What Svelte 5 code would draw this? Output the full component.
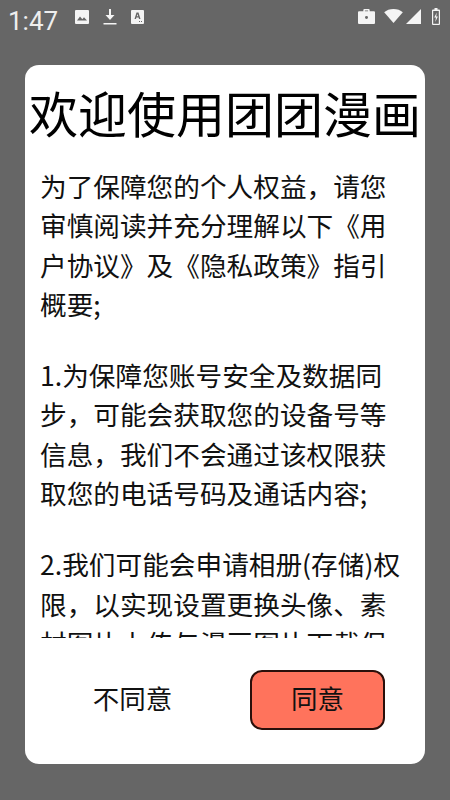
<script>
  const paragraphs = [
    ['为了保障您的个人权益，请您', '审慎阅读并充分理解以下《用', '户协议》及《隐私政策》指引', '概要;'],
    ['1.为保障您账号安全及数据同', '步，可能会获取您的设备号等', '信息，我们不会通过该权限获', '取您的电话号码及通话内容;'],
    ['2.我们可能会申请相册(存储)权', '限，以实现设置更换头像、素', '材图片上传与漫画图片下载保', '存等功能;']
  ];
</script>

<div class="page">
  <header class="status">
    <div class="left">
      <span class="time">1:47</span>
      <svg class="ic" width="14" height="14" viewBox="0 0 14 14"><path fill="#f4f4f4" d="M1 0h12a1 1 0 0 1 1 1v12a1 1 0 0 1-1 1H1a1 1 0 0 1-1-1V1a1 1 0 0 1 1-1z"/><path fill="#666" d="M2 10.500l3-4 2.300 2.800 1.700-2 3 3.200z"/></svg>
      <svg class="ic dl" width="14" height="17" viewBox="0 0 14 17"><path fill="#f4f4f4" d="M6 1h2v6h3.500L7 12 2.500 7H6zM0.500 15h13v1.500H.5z"/></svg>
      <svg class="ic a" width="13" height="14" viewBox="0 0 13 14"><path fill="#f4f4f4" d="M1 0h11a1 1 0 0 1 1 1v12a1 1 0 0 1-1 1H1a1 1 0 0 1-1-1V1a1 1 0 0 1 1-1z"/><path fill="#666" d="M5.500 2.500h2l2 6.500H8l-.4-1.500H5.400L5 9H3.500zM5.800 6.200h1.400L6.500 4z"/><path fill="#666" d="M8 11h1v1H8zM10 11h1v1h-1z"/></svg>
    </div>
    <div class="right">
      <svg width="17" height="15" viewBox="0 0 16 14"><path fill="#f4f4f4" d="M5 2V1a1 1 0 0 1 1-1h4a1 1 0 0 1 1 1v1h4a1 1 0 0 1 1 1v10a1 1 0 0 1-1 1H1a1 1 0 0 1-1-1V3a1 1 0 0 1 1-1zm1.500 0h3V1.300h-3z"/><circle cx="8" cy="8" r="1.400" fill="#666"/></svg>
      <svg class="wifi" width="19" height="14" viewBox="0 0 20 15"><path fill="#f4f4f4" d="M0 3.500C2.500 1.300 6 0 10 0s7.500 1.300 10 3.500L10 15z"/></svg>
      <svg class="signal" width="15" height="15" viewBox="0 0 15 15"><path fill="#f4f4f4" d="M15 0v15H0z"/></svg>
      <svg class="batt" width="8" height="17" viewBox="0 0 8 17"><path fill="#f4f4f4" d="M2.500 0h3v1.500H7a1 1 0 0 1 1 1V16a1 1 0 0 1-1 1H1a1 1 0 0 1-1-1V2.500a1 1 0 0 1 1-1h1.500z"/><path fill="#666" d="M1.200 3h5.600v12.800H1.200z"/><path fill="#f4f4f4" d="M4.800 4.500L2.200 9.500h1.700L3.300 14l2.600-5.500H4.200z"/></svg>
    </div>
  </header>

  <main class="card">
    <h1>欢迎使用团团漫画</h1>
    <div class="body">
      {#each paragraphs as lines}
        <p>
          {#each lines as line}
            <span class="line">{line}</span>
          {/each}
        </p>
      {/each}
    </div>
    <div class="actions">
      <button class="btn">不同意</button>
      <button class="btn agree">同意</button>
    </div>
  </main>
</div>

<style>
  :global(body) {
    margin: 0;
    background: #666666;
  }
  .page {
    width: 450px;
    height: 800px;
    background: #666666;
    overflow: hidden;
    font-family: "Noto Sans CJK SC", "Roboto", sans-serif;
    display: flex;
    flex-direction: column;
  }
  .status {
    height: 35px;
    flex: none;
    display: flex;
    justify-content: space-between;
    align-items: center;
    padding: 0 8px;
    box-sizing: border-box;
  }
  .left, .right {
    display: flex;
    align-items: center;
  }
  .left { margin-top: 2px; }
  .time {
    font-family: Roboto, sans-serif;
    font-size: 26px;
    color: #eeeeee;
    width: 67px;
    margin-top: 4px;
  }
  .ic { display: block; margin-top: -4px; }
  .dl { margin-left: 14px; }
  .a { margin-left: 14px; }
  .right {
    margin-top: -3px;
    margin-right: 1px;
  }
  .wifi { margin-left: 9px; }
  .signal { margin-left: 3px; }
  .batt { margin-left: 11px; margin-right: 1px; }
  .card {
    margin: 30px 25px 0;
    width: 400px;
    height: 699px;
    background: #fff;
    border-radius: 14px;
    display: flex;
    flex-direction: column;
    box-sizing: border-box;
  }
  h1 {
    margin: 0;
    font-weight: 400;
    font-size: 49px;
    line-height: 64px;
    height: 64px;
    padding-top: 15px;
    text-align: center;
    color: #000;
    white-space: nowrap;
  }
  .body {
    margin: 22px 0 0;
    padding: 0 15px;
    height: 472px;
    overflow: hidden;
    font-size: 26.67px;
    line-height: 39.3px;
    color: #111;
  }
  p { margin: 0 0 32px; }
  .line { display: block; white-space: nowrap; }
  .actions {
    display: flex;
    justify-content: space-between;
    padding: 0 40px;
    margin-top: 32px;
  }
  .btn {
    width: 135px;
    height: 60px;
    border: 2px solid transparent;
    border-radius: 12px;
    background: transparent;
    font-family: inherit;
    font-size: 26.5px;
    color: #111;
    padding: 0 0 5px;
  }
  .agree {
    background: #ff735c;
    border-color: #2a0f0a;
  }
</style>
